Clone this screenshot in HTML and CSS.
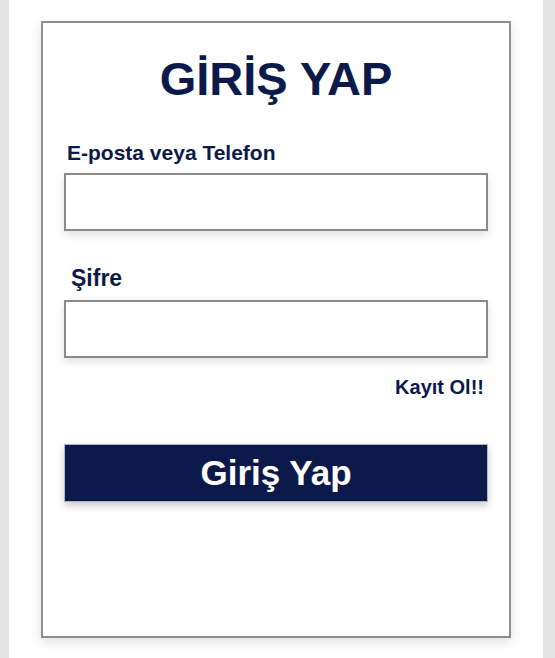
FILE: index.html
```html
<!DOCTYPE html>
<html lang="tr">
<head>
<meta charset="utf-8">
<title>Giriş Yap</title>
<link rel="stylesheet" href="styles.css">
</head>
<body>
<div class="page">
  <form class="card">
    <h1 class="title">GİRİŞ YAP</h1>
    <label class="label label-mail" for="mail">E-posta veya Telefon</label>
    <input class="field" id="mail" type="text">
    <label class="label label-pass" for="pass">Şifre</label>
    <input class="field" id="pass" type="password">
    <a class="register" href="#">Kayıt Ol!!</a>
    <button class="submit" type="button">Giriş Yap</button>
  </form>
</div>
</body>
</html>
```
FILE: styles.css
```css
html, body {
  margin: 0;
  padding: 0;
}
body {
  background: #e4e4e4;
  font-family: "Liberation Sans", Arial, sans-serif;
  color: #0b1a4a;
}
.page {
  width: 534px;
  margin-left: 9px;
  min-height: 658px;
  background: #ffffff;
  padding-top: 21px;
  box-sizing: border-box;
}
.card {
  margin-left: 32px;
  width: 470px;
  height: 617px;
  box-sizing: border-box;
  border: 2px solid #8e8e8e;
  box-shadow: 0 4px 10px rgba(0, 0, 0, 0.12);
  background: #fff;
  padding: 29px 21px 0 21px;
  display: flex;
  flex-direction: column;
}
.title {
  margin: 0;
  text-align: center;
  font-size: 47px;
  line-height: 53px;
  font-weight: bold;
  color: #0b1a4a;
}
.label {
  display: block;
  font-weight: bold;
  color: #0b1a4a;
}
.label-mail {
  margin-top: 36px;
  margin-left: 3px;
  font-size: 21px;
  line-height: 24px;
}
.label-pass {
  margin-top: 34px;
  margin-left: 7px;
  font-size: 23px;
  line-height: 26px;
}
.field {
  display: block;
  box-sizing: border-box;
  width: 424px;
  height: 58px;
  margin: 8px 0 0 0;
  border: 2px solid #8a8a8a;
  box-shadow: 0 4px 8px rgba(0, 0, 0, 0.12);
  background: #fff;
  padding: 0 10px;
  font-size: 18px;
}
.label-pass + .field {
  margin-top: 9px;
}
.register {
  align-self: flex-end;
  margin-top: 18px;
  margin-right: 4px;
  font-size: 20px;
  line-height: 23px;
  font-weight: bold;
  color: #0b1a4a;
  text-decoration: none;
}
.submit {
  margin-top: 45px;
  width: 424px;
  height: 58px;
  border: 1px solid #b0b4c4;
  background: #0b1a4a;
  color: #ffffff;
  font-family: "Liberation Sans", Arial, sans-serif;
  font-size: 35px;
  font-weight: bold;
  box-shadow: 0 4px 8px rgba(0, 0, 0, 0.2);
  cursor: pointer;
  padding: 0;
}
```
